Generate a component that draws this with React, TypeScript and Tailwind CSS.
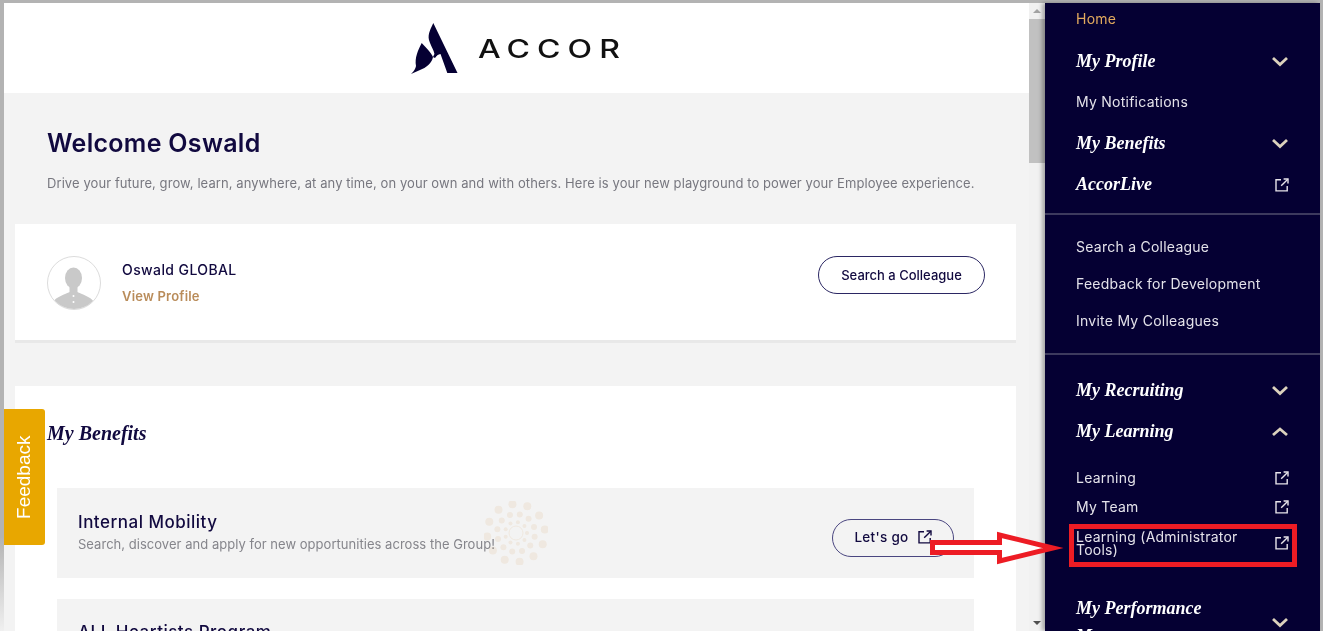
import React from 'react';

const sans = "font-['Inter',sans-serif]";
const serif = "font-['Liberation_Serif',serif]";

const ExternalIcon = ({ className = 'text-[#e8e4ea]' }: { className?: string }) => (
  <svg width="14" height="14" viewBox="0 0 14 14" fill="none" stroke="currentColor" strokeWidth="1.4" className={className}>
    <path d="M6 1.7H1v11.2h11.2V8" />
    <path d="M6.2 7.8 12.8 1.2" />
    <path d="M8.6 1h4.4v4.4" />
  </svg>
);

const Chevron = ({ up = false }: { up?: boolean }) => (
  <svg width="18" height="11" viewBox="0 0 18 11" fill="none" stroke="#dcd2bd" strokeWidth="2.8">
    <path d={up ? 'M2 9l7-6 7 6' : 'M2 2l7 6.5L16 2'} />
  </svg>
);

const NavHeading = ({ label, up, external }: { label: string; up?: boolean; external?: boolean }) => (
  <div className="flex h-[41px] items-center justify-between pr-[31px]">
    <span className={`${serif} text-[18px] font-bold italic text-white`}>{label}</span>
    {external ? <ExternalIcon /> : <Chevron up={up} />}
  </div>
);

const NavLink = ({ label, h, external }: { label: string; h: string; external?: boolean }) => (
  <div className={`flex items-center justify-between pb-[2px] pr-[31px] text-[14px] tracking-[0.25px] text-[#e4e2ea] ${h}`}>
    <span>{label}</span>
    {external && <ExternalIcon />}
  </div>
);

const Divider = () => <div className="-ml-[31px] h-[2px] bg-[#3d3a5e]" />;

const Spinner = () => {
  const dots: React.ReactElement[] = [];
  const rings = [
    { r: 11, n: 9, s: 2 },
    { r: 19, n: 12, s: 3 },
    { r: 29, n: 12, s: 4 },
  ];
  rings.forEach((ring, i) => {
    for (let k = 0; k < ring.n; k++) {
      const a = (k / ring.n) * Math.PI * 2 + i * 0.2;
      dots.push(
        <circle key={`${i}-${k}`} cx={32 + Math.cos(a) * ring.r} cy={32 + Math.sin(a) * ring.r} r={ring.s} fill="#fbf4eb" />,
      );
    }
  });
  return (
    <svg width="64" height="64" viewBox="0 0 64 64" className="absolute left-[484px] top-[501px] mix-blend-multiply">
      <circle cx="32" cy="32" r="7" fill="none" stroke="#fbf4eb" strokeWidth="1" />
      {dots}
    </svg>
  );
};

const Avatar = () => (
  <svg width="54" height="54" viewBox="0 0 54 54" className="shrink-0">
    <defs>
      <clipPath id="avatar-clip">
        <circle cx="27" cy="27" r="26" />
      </clipPath>
    </defs>
    <circle cx="27" cy="27" r="26.5" fill="white" stroke="#dcdcdc" />
    <g clipPath="url(#avatar-clip)" fill="#c9c9c9">
      <ellipse cx="26.5" cy="22" rx="8.5" ry="10.5" />
      <rect x="22.5" y="29" width="8" height="8" />
      <path d="M6 46c3-5 12-8 17-10h7c5 2 14 5 17 10l-4 8H11z" />
    </g>
    <circle cx="26.5" cy="40" r="1" fill="white" />
    <circle cx="26.5" cy="46" r="1" fill="white" />
  </svg>
);

export default function App() {
  return (
    <div className={`relative flex h-[631px] w-[1323px] overflow-hidden bg-[#b3b3b3] pr-[3px] pt-[3px] ${sans}`}>
      <div className="w-[4px] shrink-0 bg-[linear-gradient(to_bottom,#b3b3b3_0%,#b3b3b3_85%,#f0f0f0_100%)]" />
      <main className="w-[1025px] shrink-0 overflow-hidden bg-[#f3f3f3]">
        <header className="flex h-[90px] items-center justify-center gap-[19px] bg-white pr-[3px]">
          <svg width="48" height="51" viewBox="0 0 48 51">
            <path
              d="M22.300 0 46.500 50H36.300L29.500 31C27 31 25.500 33 24 35 24 28 20 24 18 17 16.500 11 20 5 22.300 0Z"
              fill="#050033"
            />
            <path d="M10.700 20C15 25 20 29 22 34 21 40 15 45 9 47L0 51C3 48 4.500 46 5 43 3.500 35 7 27 10.700 20Z" fill="#050033" />
            <path d="M22 34C24 29 28 26.500 33 26L29.500 31C27 31 25 32.500 23.500 35Z" fill="#050033" />
          </svg>
          <span className="mt-[3px] inline-block w-[141px] origin-left scale-x-[1.28] whitespace-nowrap text-[25px] font-medium tracking-[5.5px] text-[#111]">
            ACCOR
          </span>
        </header>

        <section className="pl-[43px] pr-[44px] pt-[34px]">
          <h1 className="text-[25px] font-semibold leading-[32px] tracking-[0.3px] text-[#11093f]">Welcome Oswald</h1>
          <p className="mt-[14px] whitespace-nowrap text-[13px] leading-[20px] tracking-[0.08px] text-[#77777f]">
            Drive your future, grow, learn, anywhere, at any time, on your own and with others. Here is your new playground to power your Employee experience.
          </p>
        </section>

        <section className="ml-[11px] mr-[13px] mt-[31px] flex h-[119px] items-start justify-between border-b-[3px] border-[#e8e8e8] bg-white pl-[32px] pr-[31px] pt-[32px]">
          <div className="flex items-center gap-[21px]">
            <Avatar />
            <div className="flex flex-col gap-[8px]">
              <span className="text-[14px] font-medium leading-[18px] tracking-[0.4px] text-[#11093f]">Oswald GLOBAL</span>
              <span className="text-[13px] font-semibold leading-[18px] tracking-[0.2px] text-[#b98c5a]">View Profile</span>
            </div>
          </div>
          <button className="h-[38px] w-[167px] rounded-full border border-[#2b2763] pt-[1px] text-[13px] font-medium text-[#11093f]">
            Search a Colleague
          </button>
        </section>

        <section className="ml-[11px] mr-[13px] mt-[43px] h-[300px] bg-white px-[42px] pt-[33px]">
          <h2 className={`-ml-[10px] ${serif} text-[20px] font-bold italic leading-[28px] text-[#11093f]`}>My Benefits</h2>
          <div className="mt-[41px] flex h-[90px] items-start justify-between bg-[#f3f3f3] pl-[21px] pr-[20px]">
            <div className="mt-[23px]">
              <h3 className="text-[17px] font-medium leading-[22px] tracking-[0.5px] text-[#11093f]">Internal Mobility</h3>
              <p className="mt-[2px] text-[13px] leading-[18px] tracking-[0.03px] text-[#85858b]">
                Search, discover and apply for new opportunities across the Group!
              </p>
            </div>
            <button className="mt-[31px] flex h-[38px] w-[122px] items-center justify-center gap-[9px] rounded-full border border-[#4a4680] pb-[2px] text-[13.5px] font-medium tracking-[0.3px] text-[#11093f]">
              Let's go
              <ExternalIcon className="text-[#11093f]" />
            </button>
          </div>
          <div className="mt-[21px] h-[90px] bg-[#f3f3f3] pl-[21px] pt-[22px]">
            <h3 className="text-[17px] font-medium leading-[22px] tracking-[0.5px] text-[#11093f]">ALL Heartists Program</h3>
          </div>
        </section>
      </main>

      <div className="flex w-[16px] shrink-0 flex-col items-center bg-[#f1f1f1]">
        <div className="flex h-[16px] items-center">
          <div className="h-0 w-0 border-x-[4px] border-b-[4px] border-x-transparent border-b-[#a3a3a3]" />
        </div>
        <div className="h-[144px] w-full bg-[#c1c1c1]" />
        <div className="flex-1" />
        <div className="flex h-[16px] items-center">
          <div className="h-0 w-0 border-x-[4px] border-t-[4px] border-x-transparent border-t-[#505050]" />
        </div>
      </div>

      <aside className="w-[275px] shrink-0 overflow-hidden bg-[#050033] pl-[31px] shadow-[-3px_0_4px_rgba(0,0,0,0.3)]">
        <div className="flex h-[32px] items-center pb-[2px] text-[14px] tracking-[0.25px] text-[#e3aa5e]">Home</div>
        <div className="h-[6px]" />
        <NavHeading label="My Profile" />
        <NavLink label="My Notifications" h="h-[41px]" />
        <NavHeading label="My Benefits" />
        <NavHeading label="AccorLive" external />
        <div className="h-[8px]" />
        <Divider />
        <div className="h-[14px]" />
        <NavLink label="Search a Colleague" h="h-[37px]" />
        <NavLink label="Feedback for Development" h="h-[37px]" />
        <NavLink label="Invite My Colleagues" h="h-[37px]" />
        <div className="h-[13px]" />
        <Divider />
        <div className="h-[15px]" />
        <NavHeading label="My Recruiting" />
        <NavHeading label="My Learning" up />
        <div className="h-[12px]" />
        <NavLink label="Learning" h="h-[29px]" external />
        <NavLink label="My Team" h="h-[29px]" external />
        <div className="mt-[1px] flex h-[42px] items-center justify-between pb-[2px] pr-[31px] text-[14px] leading-[13px] tracking-[0.25px] text-[#e4e2ea]">
          <span className="w-[180px]">Learning (Administrator Tools)</span>
          <ExternalIcon />
        </div>
        <div className="h-[29px]" />
        <div className="flex items-center justify-between pr-[31px]">
          <span className={`${serif} w-[170px] text-[18px] font-bold italic leading-[28px] text-white`}>My Performance Management</span>
          <Chevron />
        </div>
      </aside>

      <Spinner />

      <div className="absolute left-[4px] top-[409px] flex h-[136px] w-[41px] items-center justify-center rounded-r-[3px] bg-[#e8a700]">
        <span className="-rotate-90 whitespace-nowrap font-['Liberation_Sans',sans-serif] text-[19px] text-white">Feedback</span>
      </div>

      <div className="absolute left-[1069px] top-[524px] h-[43px] w-[228px] border-[5px] border-[#ed1c24]" />
      <svg width="140" height="36" viewBox="0 0 140 36" className="absolute left-[930px] top-[530px]">
        <path d="M2.500 12.500H69.500V5L123 18 69.500 31V22.500H2.500Z" fill="white" stroke="#ed1c24" strokeWidth="5" strokeMiterlimit="10" />
      </svg>
    </div>
  );
}
